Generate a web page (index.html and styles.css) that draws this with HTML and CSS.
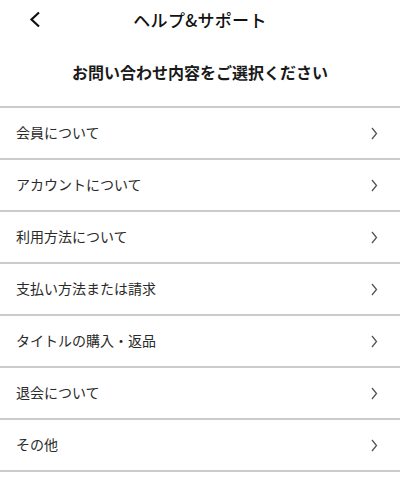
FILE: index.html
```html
<!DOCTYPE html>
<html>
<head>
<meta charset="utf-8">
<title>ヘルプ&サポート</title>
<link rel="stylesheet" href="styles.css">
</head>
<body>

<div class="header">
  <span class="back">
    <svg width="12" height="17" viewBox="0 0 12 17"><path d="M10 1.5 L2.5 8.5 L10 15.5" fill="none" stroke="#111" stroke-width="2.2"/></svg>
  </span>
  <h1 class="title">ヘルプ&amp;サポート</h1>
</div>

<p class="lead">お問い合わせ内容をご選択ください</p>

<ul class="menu">
  <li class="menu-item"><span>会員について</span><svg class="chev" viewBox="0 0 7 13"><path d="M1 1 L5.5 6.5 L1 12"/></svg></li>
  <li class="menu-item"><span>アカウントについて</span><svg class="chev" viewBox="0 0 7 13"><path d="M1 1 L5.5 6.5 L1 12"/></svg></li>
  <li class="menu-item"><span>利用方法について</span><svg class="chev" viewBox="0 0 7 13"><path d="M1 1 L5.5 6.5 L1 12"/></svg></li>
  <li class="menu-item"><span>支払い方法または請求</span><svg class="chev" viewBox="0 0 7 13"><path d="M1 1 L5.5 6.5 L1 12"/></svg></li>
  <li class="menu-item"><span>タイトルの購入・返品</span><svg class="chev" viewBox="0 0 7 13"><path d="M1 1 L5.5 6.5 L1 12"/></svg></li>
  <li class="menu-item"><span>退会について</span><svg class="chev" viewBox="0 0 7 13"><path d="M1 1 L5.5 6.5 L1 12"/></svg></li>
  <li class="menu-item"><span>その他</span><svg class="chev" viewBox="0 0 7 13"><path d="M1 1 L5.5 6.5 L1 12"/></svg></li>
</ul>

</body>
</html>
```

FILE: styles.css
```css
body {
  margin: 0;
  background: #fff;
  color: #222;
  font-family: "Noto Sans CJK JP", "Noto Sans", sans-serif;
}

.header {
  position: relative;
  height: 40px;
  display: flex;
  align-items: center;
  justify-content: center;
}

.back {
  position: absolute;
  left: 29px;
  top: 11px;
  width: 12px;
  height: 17px;
}

.back svg {
  display: block;
}

.title {
  margin: 0;
  padding-bottom: 2px;
  font-size: 17px;
  font-weight: 500;
  color: #111;
  letter-spacing: 0.3px;
}

.lead {
  margin: 0;
  height: 66px;
  padding-bottom: 3px;
  box-sizing: border-box;
  display: flex;
  align-items: center;
  justify-content: center;
  font-size: 16px;
  font-weight: 700;
  color: #1a1a1a;
}

.menu {
  list-style: none;
  margin: 0;
  padding: 0;
  border-bottom: 2px solid #cbcbcb;
}

.menu-item {
  height: 50px;
  box-sizing: content-box;
  border-top: 2px solid #cbcbcb;
  display: flex;
  align-items: center;
  justify-content: space-between;
  padding: 0 22px 0 16px;
  font-size: 14px;
  color: #2a2a2a;
}

.menu-item span {
  padding-bottom: 3px;
}

.chev {
  width: 7px;
  height: 13px;
  fill: none;
  stroke: #555;
  stroke-width: 1.3;
}
```
